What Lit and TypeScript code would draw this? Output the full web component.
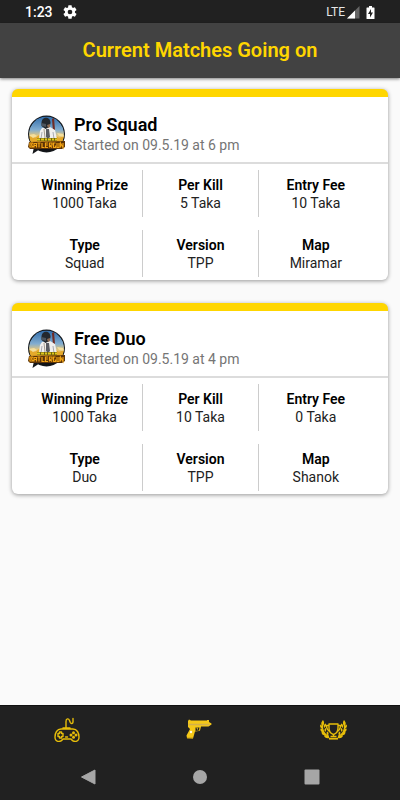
import { LitElement, html, css, svg } from "lit";
import { customElement, property } from "lit/decorators.js";

interface Match {
  name: string;
  started: string;
  facts: { label: string; value: string }[];
}

const facts = (prize: string, kill: string, fee: string, type: string, version: string, map: string) => [
  { label: "Winning Prize", value: prize },
  { label: "Per Kill", value: kill },
  { label: "Entry Fee", value: fee },
  { label: "Type", value: type },
  { label: "Version", value: version },
  { label: "Map", value: map },
];

const matches: Match[] = [
  {
    name: "Pro Squad",
    started: "Started on 09.5.19 at 6 pm",
    facts: facts("1000 Taka", "5 Taka", "10 Taka", "Squad", "TPP", "Miramar"),
  },
  {
    name: "Free Duo",
    started: "Started on 09.5.19 at 4 pm",
    facts: facts("1000 Taka", "10 Taka", "0 Taka", "Duo", "TPP", "Shanok"),
  },
];

@customElement("match-logo")
export class MatchLogo extends LitElement {
  static styles = css`
    :host { display: block; width: 40px; height: 40px; flex: none; }
    svg { display: block; width: 100%; height: 100%; }
  `;
  render() {
    return html`<svg viewBox="0 0 40 40" aria-hidden="true">
      <defs>
        <linearGradient id="sky" x1="0" y1="0" x2="0" y2="1">
          <stop offset="0" stop-color="#2f6cab" />
          <stop offset=".38" stop-color="#82add0" />
          <stop offset=".56" stop-color="#e8c778" />
          <stop offset=".75" stop-color="#d08a20" />
          <stop offset="1" stop-color="#20180c" />
        </linearGradient>
        <clipPath id="disc"><circle cx="19.500" cy="19" r="17.500" /></clipPath>
      </defs>
      <path d="M7 32l-1.500 7 6-4z" fill="#15171a" />
      <circle cx="19.500" cy="19" r="18.500" fill="#15191e" />
      <g clip-path="url(#disc)">
        <circle cx="19.500" cy="19" r="17.500" fill="url(#sky)" />
        <path d="M1 24l4-4 3 3 4-3 2 5h10l4-5 4 3 6-2v9H1z" fill="#e5a92b" />
        <path d="M2 20l5-1 3 2-4 2zM30 18l6 1 2 3-6-1z" fill="#f5df9c" />
        <path d="M25 4l2-1 1 12-2 2z" fill="#702c25" />
        <path d="M15 13l8-1 5 3 2 9H12l1-8z" fill="#f1efed" />
        <path d="M15 17l-1 7M26 17l1 7" stroke="#a8abb3" fill="none" />
        <path d="M19 14h3l1 8-2 2-2-2z" fill="#5a5c62" />
        <path d="M17 14l1 9" stroke="#a59c90" fill="none" />
        <path d="M14.500 8c0-7 9-7 9 0l-1 4-4 2-4-3z" fill="#23282e" />
        <path d="M14 8l5 1v3l-4-1z" fill="#4c545d" />
        <path d="M20 10l3-1v3l-2 1z" fill="#8e6b52" />
        <path d="M8 34h24l-6 5H13z" fill="#101318" />
      </g>
      <path d="M2 27l36-1v6l-3 2H3l-2-2z" fill="#5c3306" />
      <path d="M10 24.500h20" stroke="#6d6210" stroke-width="3" />
      <path d="M10 24.500h3M14 24.500h3M18 24.500h2M21 24.500h3M25 24.500h2M28 24.500h2" stroke="#e2c81c" stroke-width="2" />
      <path
        d="M3 27.500v5M3 28h2.500l-1 2 1.500 2H3M7 32.500v-4h2.500v4M7 30.500h2.500M10.500 28h3M12 28v4.500M15 28v4.500h2.500M21 28h-2.500v4.500H21M18.500 30H21M22.500 32.500V28H25v2l-2 .5 2 2M28.500 28h-2v4.500h2v-2M30 28v4.500h2V28M33.500 32.500V28l2.500 4.500V28"
        fill="none" stroke="#f2a414" stroke-width="1.200" />
    </svg>`;
  }
}

@customElement("match-card")
export class MatchCard extends LitElement {
  @property({ attribute: false }) match!: Match;

  static styles = css`
    :host {
      display: block;
      background: #fff;
      border-top: 8px solid #ffd600;
      border-radius: 6px;
      box-shadow: 0 1px 4px rgba(0, 0, 0, 0.4);
      overflow: hidden;
    }
    .head {
      display: flex;
      align-items: center;
      gap: 7px;
      padding: 17px 15px 7px;
      border-bottom: 2px solid #dcdcdc;
    }
    .name { margin: 0; font-size: 18px; line-height: 22px; font-weight: 600; color: #000; }
    .started { margin: 0; font-size: 14px; line-height: 19px; color: #757575; }
    .facts {
      display: grid;
      grid-template-columns: repeat(3, 1fr);
      row-gap: 13px;
      margin: 0;
      padding: 6px 15px 3px;
    }
    .fact { padding: 6px 0 5px; text-align: center; border-left: 1px solid #ccc; }
    .fact:nth-child(3n + 1) { border-left: 0; }
    .label, .value { margin: 0; font-size: 14px; line-height: 18px; color: #000; }
    .label { font-weight: 600; }
    .value { color: #222; }
  `;

  render() {
    return html`
      <header class="head">
        <match-logo></match-logo>
        <div>
          <h2 class="name">${this.match.name}</h2>
          <p class="started">${this.match.started}</p>
        </div>
      </header>
      <dl class="facts">
        ${this.match.facts.map(
          (f) => html`<div class="fact"><dt class="label">${f.label}</dt><dd class="value">${f.value}</dd></div>`
        )}
      </dl>
    `;
  }
}

const gamepad = svg`
  <g fill="none" stroke="#e6bd0a" stroke-width="1.400" stroke-linecap="round" stroke-linejoin="round">
    <path d="M13 11V4.500c0-3 2.500-3.500 3.500-1l.8 2c.7 1.600 2.700 1.200 2.700-.5V1.500" />
    <path d="M10 11h7M8 12h12c4 0 6 4 6 8 0 5-5 6-8 2h-8c-3 4-8 3-8-2 0-4 2-8 6-8z" />
    <path d="M6.500 15v1.500H5v3h1.500V21h2v-1.500H10v-3H8.500V15z" />
    <path d="M12.500 20h2" />
  </g>
  <g fill="#e6bd0a"><circle cx="20.500" cy="15.700" r="1.500" /><circle cx="20.500" cy="20.300" r="1.500" />
  <circle cx="18" cy="18" r="1.500" /><circle cx="23" cy="18" r="1.500" /></g>`;

const pistol = svg`
  <path d="M2 3l1-1.500 2 1h16V2h2v2l2.500 1.500v1L22.500 8.500H15l-1 4-1 .5-4 .500-2 7-6-.5-.5-2.500L4 11l-2-2V4z" fill="#f5c818" />
  <path d="M2.500 6.500h21" stroke="#d3b04c" stroke-width="1.500" />
  <path d="M9.500 9.500h4l-.5 3-3.500.5z" fill="#212121" />
  <path d="M11 9.500l.5 2" stroke="#f5c818" />
  <path d="M1 20h6" stroke="#c39a14" />
  <circle cx="5" cy="14" r="1.200" fill="#fffbe8" />`;

const trophy = svg`
  <g fill="none" stroke="#e6bd0a" stroke-width="1.400" stroke-linejoin="round">
    <path d="M9 4h9v4c0 4-1.500 5.500-4.500 6.500C10.500 13.500 9 12 9 8z" />
    <path d="M9 5.500H6.500c0 4 1.500 5 3.500 6M18 5.500h2.500c0 4-1.500 5-3.500 6M13.500 14.500v2M10.500 16.500h6" />
    <path d="M2.500 4C1.500 10 4 15 9 16.500M24.500 4c1 6-1.500 11-6.500 12.500" />
    <path d="M9 18.700h9" stroke-width="1.800" />
  </g>
  <g fill="#e6bd0a">
    <path d="M3 6C0 4 1.500 2 3 0c1.500 2 1.500 4 0 6zM3 9C0 8-.5 6 .5 4.500 2 5.500 3 7 3 9zM4 12.500C1 12 0 10.500.5 8.500c2 .5 3.500 2 3.500 4zM6 15.500c-3 0-4.500-1-4.500-3.500C4 12 5.500 13.500 6 15.500zM9.500 18c-3 .5-5 0-5.500-2.500 3-.5 4.500.5 5.500 2.500z" />
    <path d="M4 8c-.5-2.500 0-4 2-4.500.5 2-.5 3.500-2 4.500zM5 12c-1-2-.5-3.500.7-4 1 1.500.5 3-.7 4zM7.500 15.500c-1.500-2-1-3.500 0-4 1.500 1.500 1.500 3 0 4z" />
    <path d="M24 6c3-2 1.500-4 0-6-1.500 2-1.500 4 0 6zM24 9c3-1 3.500-3 2.500-4.500C25 5.500 24 7 24 9zM23 12.500c3-.5 4-2 3.500-4-2 .5-3.500 2-3.500 4zM21 15.500c3 0 4.500-1 4.500-3.500-2.500 0-4 1.500-4.500 3.500zM17.500 18c3 .5 5 0 5.500-2.500-3-.5-4.500.5-5.500 2.500z" />
    <path d="M23 8c.5-2.500 0-4-2-4.500-.5 2 .5 3.500 2 4.500zM22 12c1-2 .5-3.500-.7-4-1 1.500-.5 3 .7 4zM19.500 15.500c1.500-2 1-3.500 0-4-1.500 1.500-1.500 3 0 4z" />
  </g>`;

@customElement("app-root")
export class AppRoot extends LitElement {
  static styles = css`
    :host {
      display: flex;
      flex-direction: column;
      min-height: 100vh;
      background: #fafafa;
      font-family: Roboto, "Liberation Sans", sans-serif;
    }
    svg { display: block; }
    .status {
      display: flex;
      align-items: center;
      height: 23px;
      box-sizing: border-box;
      padding: 1px 25px 0;
      background: #212121;
      color: #fff;
    }
    .time { font-size: 14px; line-height: 20px; font-weight: 500; margin-right: 9px; }
    .network { margin-left: auto; font-size: 12px; line-height: 20px; margin-right: 2px; color: #e6e6e6; }
    .battery { margin-left: 6px; }
    .bar {
      padding: 15px 16px 16px;
      background: #424242;
      box-shadow: 0 1px 3px rgba(0, 0, 0, 0.5);
      text-align: center;
    }
    .title { margin: 0; font-size: 20px; line-height: 24px; font-weight: 600; color: #ffd600; }
    .list { flex: 1; display: flex; flex-direction: column; gap: 23px; padding: 11px 12px; }
    .tabs { display: grid; grid-template-columns: repeat(3, 1fr); background: #212121; border-top: 1px solid #111; }
    .system { display: grid; grid-template-columns: repeat(3, 1fr); background: #212121; padding: 0 8%; }
    button {
      display: flex;
      align-items: center;
      justify-content: center;
      height: 47px;
      padding: 0;
      border: 0;
      background: none;
    }
  `;

  render() {
    return html`
      <div class="status">
        <span class="time">1:23</span>
        <svg width="16" height="16" viewBox="0 0 24 24" aria-label="Settings" fill="#fff">
          <path d="M19.400 13c.04-.3.060-.65.060-1s-.02-.7-.07-1l2.100-1.650a.5.5 0 0 0 .120-.64l-2-3.460a.5.5 0 0 0-.6-.22l-2.490 1a7.300 7.300 0 0 0-1.690-.98l-.38-2.650A.5.5 0 0 0 14 2h-4a.5.5 0 0 0-.490.420l-.38 2.650c-.6.250-1.170.580-1.690.980l-2.490-1a.5.5 0 0 0-.6.220l-2 3.460a.5.5 0 0 0 .120.640L4.570 11c-.04.300-.07.660-.07 1s.02.700.07 1l-2.100 1.650a.5.5 0 0 0-.12.640l2 3.460c.120.220.380.300.6.220l2.490-1c.520.400 1.080.730 1.690.980l.380 2.650c.03.240.240.420.490.420h4c.250 0 .460-.18.490-.42l.380-2.650a7.300 7.300 0 0 0 1.690-.98l2.490 1c.220.080.480 0 .6-.22l2-3.460a.5.5 0 0 0-.12-.64zM12 15.500a3.500 3.500 0 1 1 0-7 3.500 3.500 0 0 1 0 7z" />
        </svg>
        <span class="network">LTE</span>
        <svg width="13" height="13" viewBox="0 0 13 13" aria-label="Signal">
          <path d="M0 12.500L12.500 0v12.500z" fill="#666" />
          <path d="M0 12.500L8 4.500v8z" fill="#fff" />
        </svg>
        <svg class="battery" width="9" height="13" viewBox="0 0 9 13" aria-label="Battery charging">
          <path d="M3 0h3v1.500h2q.5 0 .5.5v10.500q0 .5-.5.5H1q-.5 0-.5-.5V2q0-.5.5-.5h2z" fill="#fff" />
          <path d="M5 3L2 8h2v3.500L7 6.500H5z" fill="#212121" />
        </svg>
      </div>
      <header class="bar"><h1 class="title">Current Matches Going on</h1></header>
      <main class="list">${matches.map((m) => html`<match-card .match=${m}></match-card>`)}</main>
      <nav class="tabs" aria-label="Sections">
        <button aria-label="Play"><svg width="27" height="25" viewBox="0 0 27 25">${gamepad}</svg></button>
        <button aria-label="Matches"><svg width="27" height="23" viewBox="0 0 27 23">${pistol}</svg></button>
        <button aria-label="Results"><svg width="27" height="20" viewBox="0 0 27 20">${trophy}</svg></button>
      </nav>
      <nav class="system" aria-label="System">
        <button aria-label="Back"><svg width="16" height="16" viewBox="0 0 16 16"><path d="M15 1v14L1.500 8z" fill="#a6a6a6" stroke="#a6a6a6" stroke-linejoin="round" /></svg></button>
        <button aria-label="Home"><svg width="16" height="16" viewBox="0 0 16 16"><circle cx="8" cy="8" r="7" fill="#a6a6a6" /></svg></button>
        <button aria-label="Recent"><svg width="16" height="16" viewBox="0 0 16 16"><rect x="0.500" y="0.500" width="15" height="15" rx="1" fill="#a6a6a6" /></svg></button>
      </nav>
    `;
  }
}
